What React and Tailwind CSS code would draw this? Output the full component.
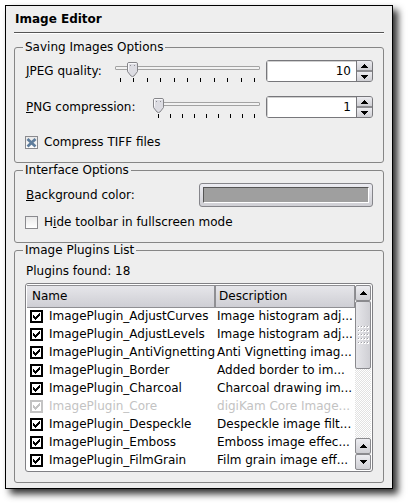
import { useId, useState } from "react";

const initialPlugins = [
  { name: "ImagePlugin_AdjustCurves", description: "Image histogram adj..." },
  { name: "ImagePlugin_AdjustLevels", description: "Image histogram adj..." },
  { name: "ImagePlugin_AntiVignetting", description: "Anti Vignetting imag..." },
  { name: "ImagePlugin_Border", description: "Added border to im..." },
  { name: "ImagePlugin_Charcoal", description: "Charcoal drawing im..." },
  { name: "ImagePlugin_Core", description: "digiKam Core Image...", disabled: true },
  { name: "ImagePlugin_Despeckle", description: "Despeckle image filt..." },
  { name: "ImagePlugin_Emboss", description: "Emboss image effec..." },
  { name: "ImagePlugin_FilmGrain", description: "Film grain image eff..." },
];

function Arrow({ down }) {
  return (
    <svg width="7" height="4" viewBox="0 0 7 4" shapeRendering="crispEdges" aria-hidden="true">
      <path d={down ? "M0 0h7v1h-1v1h-1v1h-1v1h-1v-1h-1v-1h-1v-1h-1z" : "M3 0h1v1h1v1h1v1h1v1h-7v-1h1v-1h1v-1h1z"} />
    </svg>
  );
}

function Group({ title, children }) {
  return (
    <fieldset className="min-w-0 rounded-[3px] border border-[#868686] px-2.5">
      <legend className="-ml-0.5 px-0.5 leading-[15px]">{title}</legend>
      {children}
    </fieldset>
  );
}

function Slider({ id, value, min, max, ticks, onChange }) {
  const ratio = (value - min) / (max - min);
  return (
    <div className="relative h-[22px] min-w-0 flex-1 pt-1.5">
      <div className="h-1 rounded-[1px] border border-[#a3a3a3] bg-[#f2f2f2]" />
      <div className="mt-2 flex h-1 justify-between px-[5px]">
        {Array.from({ length: ticks }, (_, i) => (
          <span key={i} className="w-px bg-black" />
        ))}
      </div>
      <div className="absolute top-0.5 right-[11px] left-0">
        <svg
          className="absolute top-0"
          style={{ left: `${ratio * 100}%` }}
          width="11"
          height="15"
          viewBox="0 0 11 15"
          aria-hidden="true"
        >
          <path d="M2 .5h7q1.500 0 1.500 1.500v7.500l-3.500 4.500q-1.500 1-3 0l-3.500-4.500v-7.500q0-1.500 1.500-1.500z" fill="#dcdce2" stroke="#858589" />
          <path d="M1.500 8.500v-7h8" fill="none" stroke="#f8f8fa" />
          <path d="M3 3h1v1h-1zM7 3h1v1h-1z" fill="#8f8f95" />
        </svg>
      </div>
      <input
        id={id}
        type="range"
        min={min}
        max={max}
        value={value}
        onChange={(e) => onChange(Number(e.target.value))}
        className="absolute inset-0 m-0 h-full w-full opacity-0"
      />
    </div>
  );
}

function SpinBox({ label, value, min, max, onChange }) {
  return (
    <div className="ml-1.5 flex h-[22px] w-[107px] overflow-hidden rounded-[3px] border border-[#77777b] bg-white">
      <input
        type="text"
        inputMode="numeric"
        aria-label={label}
        value={value}
        onChange={(e) => onChange(Math.min(max, Math.max(min, Number(e.target.value) || min)))}
        className="min-w-0 flex-1 bg-white pr-[5px] text-right shadow-[inset_1px_1px_0_#d0d0d0] outline-none"
      />
      <div className="flex w-4 flex-col gap-0.5 border-l border-[#77777b] bg-[#8c8c90]">
        <button
          type="button"
          aria-label={`Increase ${label}`}
          onClick={() => onChange(Math.min(max, value + 1))}
          className="flex flex-1 items-center justify-center bg-linear-to-b from-[#ececf0] to-[#cfcfd4]"
        >
          <Arrow />
        </button>
        <button
          type="button"
          aria-label={`Decrease ${label}`}
          onClick={() => onChange(Math.max(min, value - 1))}
          className="flex flex-1 items-center justify-center bg-linear-to-b from-[#ececf0] to-[#cfcfd4]"
        >
          <Arrow down />
        </button>
      </div>
    </div>
  );
}

function SliderRow({ label, labelWidth, name, initial, min, max, ticks }) {
  const id = useId();
  const [value, setValue] = useState(initial);
  return (
    <div className="flex h-[22px] items-center">
      <label htmlFor={id} className={`${labelWidth} shrink-0 pl-px`}>
        {label}
      </label>
      <Slider id={id} value={value} min={min} max={max} ticks={ticks} onChange={setValue} />
      <SpinBox label={name} value={value} min={min} max={max} onChange={setValue} />
    </div>
  );
}

function CheckRow({ initial, children }) {
  const [checked, setChecked] = useState(initial);
  return (
    <label className="flex h-4 items-center gap-1.5">
      <span className="relative flex">
        <input
          type="checkbox"
          checked={checked}
          onChange={(e) => setChecked(e.target.checked)}
          className="size-[13px] appearance-none border border-[#8a8a8e] bg-linear-to-b from-[#e9e9e9] to-white"
        />
        {checked && (
          <svg className="pointer-events-none absolute inset-0" width="13" height="13" viewBox="0 0 13 13" aria-hidden="true">
            <path d="M2.500 3l8 7.500M10.500 3l-8 7.500" stroke="#5f7d9c" strokeWidth="2.800" />
          </svg>
        )}
      </span>
      <span>{children}</span>
    </label>
  );
}

function PluginRow({ plugin }) {
  const id = useId();
  const [checked, setChecked] = useState(true);
  return (
    <tr className={plugin.disabled ? "h-[18px] text-[#c3c3c3]" : "h-[18px] text-black"}>
      <td className="p-0">
        <div className="flex items-center gap-1.5 pl-[3px]">
          <span className="relative flex">
            <input
              id={id}
              type="checkbox"
              checked={checked}
              disabled={plugin.disabled}
              onChange={(e) => setChecked(e.target.checked)}
              className="size-[13px] appearance-none border-2 border-current bg-white"
            />
            {checked && (
              <svg className="pointer-events-none absolute inset-0" width="13" height="13" viewBox="0 0 13 13" shapeRendering="crispEdges" aria-hidden="true">
                <path d="M3 5h1v1h1v1h1v-1h1v-1h1v-1h1v-1h1v3h-1v1h-1v1h-1v1h-1v1h-1v-1h-1v-1h-1z" fill="currentColor" />
              </svg>
            )}
          </span>
          <label htmlFor={id}>{plugin.name}</label>
        </div>
      </td>
      <td className="overflow-hidden p-0 pl-0.5 whitespace-nowrap">{plugin.description}</td>
    </tr>
  );
}

function ScrollButton({ label, down }) {
  return (
    <button
      type="button"
      aria-label={label}
      className="flex h-4 items-center justify-center rounded-[2px] border border-[#8a8a8e] bg-linear-to-b from-[#ededf1] to-[#cfcfd4]"
    >
      <Arrow down={down} />
    </button>
  );
}

function PluginList() {
  return (
    <div className="flex rounded-[3px] border border-[#808084] bg-white p-px">
      <table className="min-w-0 flex-1 table-fixed border-collapse">
        <colgroup>
          <col className="w-[188px]" />
          <col />
        </colgroup>
        <thead>
          <tr className="h-[22px] bg-linear-to-b from-[#e6e6ea] to-[#cdcdd3] text-left">
            <th className="border-y border-r-2 border-[#8f8f93] p-0 pl-[5px] font-normal">Name</th>
            <th className="border-y border-r border-[#8f8f93] p-0 pl-[3px] font-normal">Description</th>
          </tr>
        </thead>
        <tbody>
          {initialPlugins.map((plugin) => (
            <PluginRow key={plugin.name} plugin={plugin} />
          ))}
        </tbody>
      </table>
      <div className="flex w-4 flex-col bg-[repeating-conic-gradient(#e2e2e2_0_25%,#ffffff_0_50%)] bg-size-[2px_2px]">
        <ScrollButton label="Scroll up" />
        <div className="flex h-[68px] items-center justify-center rounded-[2px] border border-[#8a8a8e] bg-linear-to-r from-[#e6e6ea] to-[#cfcfd4]">
          <svg width="11" height="19" viewBox="0 0 11 19" shapeRendering="crispEdges" aria-hidden="true">
            {[0, 4, 8, 12, 16].map((y) =>
              [0, 3, 6, 9].map((x) => (
                <g key={`${x}-${y}`}>
                  <rect x={x} y={y} width="2" height="2" fill="#ffffff" />
                  <rect x={x} y={y} width="1" height="1" fill="#a0a0a4" />
                </g>
              ))
            )}
          </svg>
        </div>
        <div className="flex-1" />
        <ScrollButton label="Scroll up one line" />
        <ScrollButton label="Scroll down" down />
      </div>
    </div>
  );
}

export default function App() {
  return (
    <div className="bg-white pt-[5px] pr-[15px] pb-[15px] pl-[5px] font-['DejaVu_Sans',sans-serif] text-[12px] leading-[15px] text-black">
      <main className="border border-black bg-[#eeeeee] px-2 pb-[5px] shadow-[5px_5px_7px_rgba(0,0,0,0.8)]">
        <h1 className="mb-[7px] h-[27px] border-b border-[#555555] pl-px leading-[26px] font-bold shadow-[0_1px_0_#ffffff]">
          Image Editor
        </h1>
        <form onSubmit={(e) => e.preventDefault()}>
          <Group title="Saving Images Options">
            <div className="flex flex-col gap-4 pt-[5px] pb-3">
              <div className="flex flex-col gap-3.5">
                <SliderRow
                  label={<><u>J</u>PEG quality:</>}
                  labelWidth="w-[90px]"
                  name="JPEG quality"
                  initial={10}
                  min={1}
                  max={100}
                  ticks={11}
                />
                <SliderRow
                  label={<><u>P</u>NG compression:</>}
                  labelWidth="w-[128px]"
                  name="PNG compression"
                  initial={1}
                  min={1}
                  max={9}
                  ticks={9}
                />
              </div>
              <CheckRow initial={true}>Compress TIFF files</CheckRow>
            </div>
          </Group>
          <Group title="Interface Options">
            <div className="flex flex-col gap-[7px] pt-[5px] pb-3">
              <div className="grid grid-cols-2 items-center">
                <label htmlFor="background-color" className="pl-px">
                  <u>B</u>ackground color:
                </label>
                <button
                  id="background-color"
                  type="button"
                  className="h-6 rounded-[3px] border border-[#85858a] bg-linear-to-b from-[#ececf2] to-[#cfcfd4] p-[3px]"
                >
                  <span className="block h-full border border-t-[#555555] border-r-white border-b-white border-l-[#555555] bg-[#9f9f9f]" />
                </button>
              </div>
              <CheckRow initial={false}>
                H<u>i</u>de toolbar in fullscreen mode
              </CheckRow>
            </div>
          </Group>
          <Group title="Image Plugins List">
            <div className="flex flex-col gap-1 pt-1.5 pb-2.5">
              <p className="pl-px">Plugins found: 18</p>
              <PluginList />
            </div>
          </Group>
        </form>
      </main>
    </div>
  );
}
